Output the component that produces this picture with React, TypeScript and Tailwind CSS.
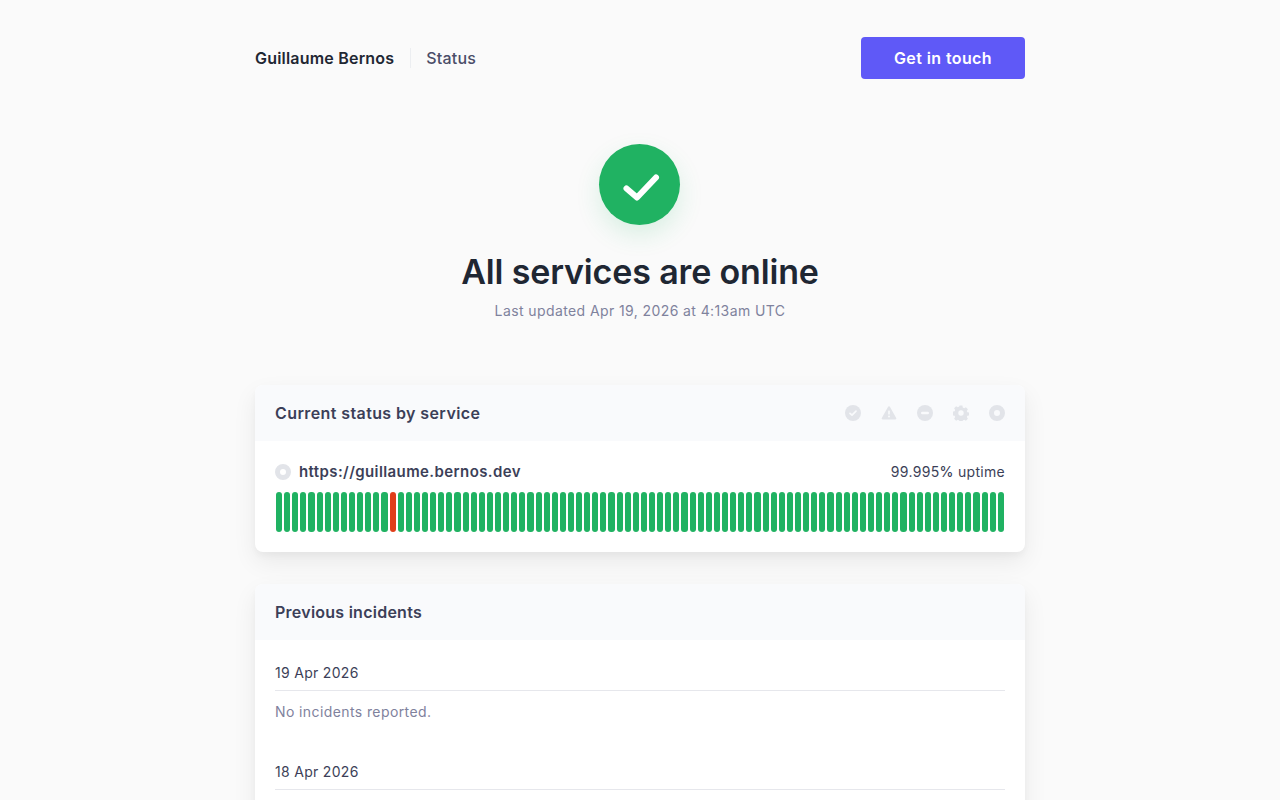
const bars = Array.from({ length: 90 }, (_, i) => i);

const days = [
  { date: "19 Apr 2026", note: "No incidents reported." },
  { date: "18 Apr 2026", note: "" },
];

function LegendIcons() {
  return (
    <div className="flex items-center gap-5 text-[#e2e4e9]">
      <svg width="16" height="16" viewBox="0 0 16 16" fill="none">
        <circle cx="8" cy="8" r="8" fill="currentColor" />
        <path d="M5 8.300l2 1.900 4-4" stroke="#f9fafc" strokeWidth="1.700" strokeLinecap="round" strokeLinejoin="round" />
      </svg>
      <svg width="16" height="16" viewBox="0 0 16 16">
        <path d="M8 1.200c.4 0 .7.2.9.5l6.300 11.200c.4.7-.1 1.500-.9 1.500H1.700c-.8 0-1.300-.8-.9-1.500L7.100 1.700c.2-.3.5-.5.9-.5z" fill="currentColor" />
        <rect x="7.200" y="5.500" width="1.600" height="4" rx=".6" fill="#f9fafc" />
        <circle cx="8" cy="11.500" r="1" fill="#f9fafc" />
      </svg>
      <svg width="16" height="16" viewBox="0 0 16 16">
        <circle cx="8" cy="8" r="8" fill="currentColor" />
        <rect x="4" y="6.800" width="8" height="2.400" rx="1.200" fill="#f9fafc" />
      </svg>
      <svg width="16" height="16" viewBox="0 0 16 16">
        <path
          fillRule="evenodd"
          d="M6.600 .6h2.800l.4 2 1.300.6 1.800-1 2 2-1.100 1.700.6 1.300 2 .4v2.800l-2 .4-.6 1.300 1.100 1.700-2 2-1.800-1-1.300.6-.4 2H6.600l-.4-2-1.300-.6-1.800 1-2-2 1.100-1.700-.6-1.300-2-.4V6.600l2-.4.6-1.300-1.100-1.700 2-2 1.800 1 1.300-.6zM8 5.300a2.700 2.700 0 100 5.400 2.700 2.700 0 000-5.400z"
          fill="currentColor"
        />
      </svg>
      <svg width="16" height="16" viewBox="0 0 16 16">
        <circle cx="8" cy="8" r="5.500" fill="none" stroke="currentColor" strokeWidth="5" />
      </svg>
    </div>
  );
}

export default function App() {
  return (
    <div className="h-screen overflow-hidden bg-[#fafafa] font-['Inter',sans-serif] text-[#3c3f58]">
      <div className="mx-auto w-[770px]">
        {/* Nav */}
        <nav className="flex items-center justify-between pt-[37px]">
          <div className="flex items-center">
            <span className="text-base font-semibold tracking-[0.2px] text-[#1f2733]">Guillaume Bernos</span>
            <span className="mr-[15px] ml-4 h-5 w-px bg-[#eceef1]" />
            <span className="text-base font-medium tracking-[0.2px] text-[#4a4d68]">Status</span>
          </div>
          <button className="h-[42px] w-[164px] rounded bg-[#5f59f7] text-base font-semibold tracking-[0.4px] text-white">
            Get in touch
          </button>
        </nav>

        {/* Summary */}
        <div className="mt-[65px] flex flex-col items-center">
          <div className="mr-px flex h-[81px] w-[81px] items-center justify-center rounded-full bg-[#20b262] shadow-[0_10px_25px_rgba(32,178,98,0.15)]">
            <svg width="44" height="34" viewBox="0 0 44 34" fill="none">
              <path d="M8.500 20.500l10.500 9L38 9.500" stroke="white" strokeWidth="6" strokeLinecap="round" strokeLinejoin="round" />
            </svg>
          </div>
          <h1 className="mt-[25px] text-[34px] leading-[44px] font-semibold tracking-[-0.15px] text-[#1f2733]">
            All services are online
          </h1>
          <p className="mt-[5px] text-sm leading-6 tracking-[0.4px] text-[#7f829d]">Last updated Apr 19, 2026 at 4:13am UTC</p>
        </div>

        {/* Current status */}
        <section className="mt-[62px] overflow-hidden rounded-lg bg-white shadow-[0_10px_25px_rgba(0,0,0,0.07),0_4px_6px_rgba(0,0,0,0.03)]">
          <header className="flex h-14 items-center justify-between bg-[#f9fafc] px-5">
            <h2 className="text-base font-semibold tracking-[0.4px] text-[#3c3f58]">Current status by service</h2>
            <LegendIcons />
          </header>
          <div className="px-5 pt-5 pb-5">
            <div className="flex h-[22px] items-center justify-between">
              <div className="flex items-center gap-2">
                <svg width="16" height="16" viewBox="0 0 16 16" className="text-[#e2e4e9]">
                  <circle cx="8" cy="8" r="5.500" fill="none" stroke="currentColor" strokeWidth="5" />
                </svg>
                <span className="text-[15px] font-semibold tracking-[0.4px] text-[#3c3f58]">https://guillaume.bernos.dev</span>
              </div>
              <span className="text-sm tracking-[0.3px]">
                99.995<span className="font-medium">%</span> uptime
              </span>
            </div>
            <div className="mt-[9px] flex h-10 gap-[2px] px-px">
              {bars.map((i) => (
                <div key={i} className={`flex-1 rounded-[3px] ${i === 14 ? "bg-[#e03e1a]" : "bg-[#20b262]"}`} />
              ))}
            </div>
          </div>
        </section>

        {/* Incidents */}
        <section className="mt-8 overflow-hidden rounded-lg bg-white shadow-[0_10px_25px_rgba(0,0,0,0.07),0_4px_6px_rgba(0,0,0,0.03)]">
          <header className="flex h-14 items-center bg-[#f9fafc] px-5">
            <h2 className="text-base font-semibold tracking-[0.25px] text-[#3c3f58]">Previous incidents</h2>
          </header>
          <div className="px-5 pt-[22px]">
            {days.map((day) => (
              <div key={day.date} className="mb-[38.5px]">
                <div className="border-b border-[#e6e7ec] pb-[7px] text-sm leading-[21px] tracking-[0.3px]">{day.date}</div>
                {day.note && <p className="mt-[10px] text-sm leading-[21px] tracking-[0.4px] text-[#7f829d]">{day.note}</p>}
              </div>
            ))}
          </div>
        </section>
      </div>
    </div>
  );
}
